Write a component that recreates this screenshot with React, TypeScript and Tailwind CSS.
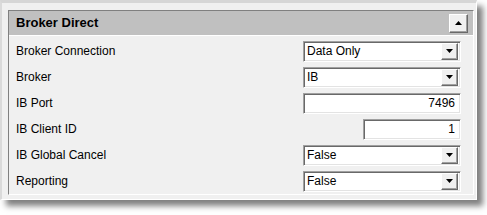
import React from "react";

const rows = [
  { label: "Broker Connection", kind: "select", value: "Data Only" },
  { label: "Broker", kind: "select", value: "IB" },
  { label: "IB Port", kind: "input", value: "7496" },
  { label: "IB Client ID", kind: "short", value: "1" },
  { label: "IB Global Cancel", kind: "select", value: "False" },
  { label: "Reporting", kind: "select", value: "False" },
];

const sunken =
  "border border-t-[#a0a0a0] border-l-[#a0a0a0] border-b-white border-r-white shadow-[inset_1px_1px_0_#696969,inset_-1px_-1px_0_#e3e3e3] bg-white";

function Caret({ up }: { up?: boolean }) {
  return (
    <svg width="7" height="4" viewBox="0 0 7 4">
      {up ? <path d="M3.5 0 L7 4 L0 4 Z" fill="#000" /> : <path d="M0 0 L7 0 L3.5 4 Z" fill="#000" />}
    </svg>
  );
}

function Select({ value }: { value: string }) {
  return (
    <div className={`w-[158px] h-[21px] flex items-center pl-[3px] pr-[2px] ${sunken}`}>
      <span className="flex-1 text-[12px] text-black leading-none">{value}</span>
      <div className="w-[17px] h-[17px] flex items-center justify-center bg-[#f0f0f0] border border-t-white border-l-white border-b-[#696969] border-r-[#696969] shadow-[inset_-1px_-1px_0_#a0a0a0]">
        <Caret />
      </div>
    </div>
  );
}

function Field({ value, width }: { value: string; width: string }) {
  return (
    <div className={`${width} h-[21px] flex items-center justify-end pr-[5px] ${sunken}`}>
      <span className="text-[12px] text-black leading-none">{value}</span>
    </div>
  );
}

export default function App() {
  return (
    <div className="w-[487px] h-[215px] bg-white font-['Liberation_Sans',Arial,sans-serif]">
      <div className="w-[477px] h-[200px] bg-[#f0f0f0] border-t-[3px] border-l-[2px] border-t-[#d6d6d6] border-l-[#dadada] border-r border-b border-r-white border-b-white shadow-[6px_6px_6px_rgba(0,0,0,0.5)] pl-[6px] pt-[7px] pr-[2px] pb-[4px] flex">
        <div className="flex-1 flex flex-col border border-t-[#808080] border-l-[#808080] border-r-white border-b-white">
          {/* header */}
          <div className="h-[25px] bg-[#c0c0c0] border-b border-b-white flex items-center pl-[7px] pr-[5px]">
            <span className="flex-1 text-[13px] font-bold text-black">Broker Direct</span>
            <div className="w-[19px] h-[19px] flex items-center justify-center bg-[#f0f0f0] border border-t-white border-l-white border-b-[#696969] border-r-[#696969] shadow-[inset_-1px_-1px_0_#a0a0a0]">
              <Caret up />
            </div>
          </div>
          {/* rows */}
          <div className="flex flex-col pt-[2px] pl-[7px] pr-[12px]">
            {rows.map((r) => (
              <div key={r.label} className="h-[26px] flex items-center">
                <span className="flex-1 text-[12px] text-black">{r.label}</span>
                {r.kind === "select" && <Select value={r.value} />}
                {r.kind === "input" && <Field value={r.value} width="w-[158px]" />}
                {r.kind === "short" && <Field value={r.value} width="w-[98px]" />}
              </div>
            ))}
          </div>
        </div>
      </div>
    </div>
  );
}
